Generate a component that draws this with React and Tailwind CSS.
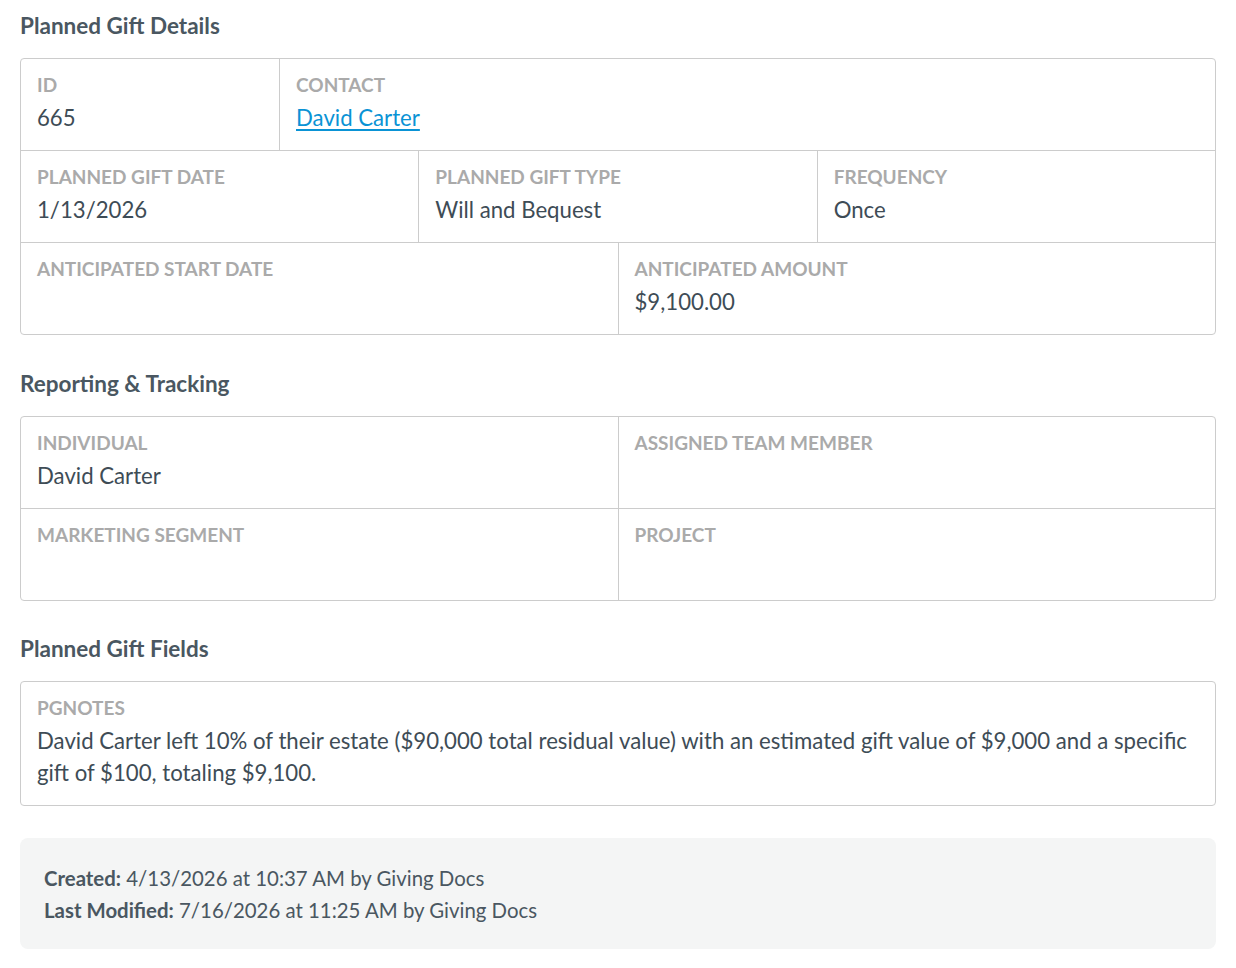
import React from "react";

const font = { fontFamily: "Lato, 'Noto Sans', sans-serif" };

function Cell({ label, children, className = "" }) {
  return (
    <div className={"flex flex-col px-4 pt-[14px] pb-[16px] " + className}>
      <div className="text-[19px] leading-[24px] font-bold uppercase text-[#aaaaaa]">{label}</div>
      <div className="mt-[5px] min-h-[32px] text-[22.2px] leading-[32px] text-[#3e4c56]">{children}</div>
    </div>
  );
}

function Heading({ children, className = "" }) {
  return (
    <h2 className={"text-[22.5px] leading-[32px] font-bold text-[#4a5761] mb-4 " + className}>{children}</h2>
  );
}

export default function App() {
  return (
    <div style={font} className="bg-white px-5 pt-[10px] pb-5 w-[1236px]">
      <Heading>Planned Gift Details</Heading>
      <div className="border border-[#cccccc] rounded-[4px] flex flex-col">
        <div className="flex">
          <Cell label="ID" className="w-[258px]">665</Cell>
          <Cell label="Contact" className="flex-1 border-l border-[#cccccc]">
            <a href="#" className="text-[#0a93d5] underline underline-offset-[3px]">David Carter</a>
          </Cell>
        </div>
        <div className="flex border-t border-[#cccccc]">
          <Cell label="Planned Gift Date" className="flex-1">1/13/2026</Cell>
          <Cell label="Planned Gift Type" className="flex-1 border-l border-[#cccccc]">Will and Bequest</Cell>
          <Cell label="Frequency" className="flex-1 border-l border-[#cccccc]">Once</Cell>
        </div>
        <div className="flex border-t border-[#cccccc]">
          <Cell label="Anticipated Start Date" className="flex-1"></Cell>
          <Cell label="Anticipated Amount" className="flex-1 border-l border-[#cccccc]">$9,100.00</Cell>
        </div>
      </div>

      <Heading className="mt-[33px]">Reporting &amp; Tracking</Heading>
      <div className="border border-[#cccccc] rounded-[4px] flex flex-col">
        <div className="flex">
          <Cell label="Individual" className="flex-1">David Carter</Cell>
          <Cell label="Assigned Team Member" className="flex-1 border-l border-[#cccccc]"></Cell>
        </div>
        <div className="flex border-t border-[#cccccc]">
          <Cell label="Marketing Segment" className="flex-1"></Cell>
          <Cell label="Project" className="flex-1 border-l border-[#cccccc]"></Cell>
        </div>
      </div>

      <Heading className="mt-8">Planned Gift Fields</Heading>
      <div className="border border-[#cccccc] rounded-[4px] flex flex-col">
        <Cell label="PGNotes">
          David Carter left 10% of their estate ($90,000 total residual value) with an estimated gift value of $9,000 and a specific gift of $100, totaling $9,100.
        </Cell>
      </div>

      <div className="mt-8 bg-[#f4f5f5] rounded-[8px] px-6 pt-6 pb-[23px] text-[20.4px] leading-[32px] text-[#4a5761]">
        <div><span className="font-bold">Created:</span> 4/13/2026 at 10:37 AM by Giving Docs</div>
        <div><span className="font-bold">Last Modified:</span> 7/16/2026 at 11:25 AM by Giving Docs</div>
      </div>
    </div>
  );
}
